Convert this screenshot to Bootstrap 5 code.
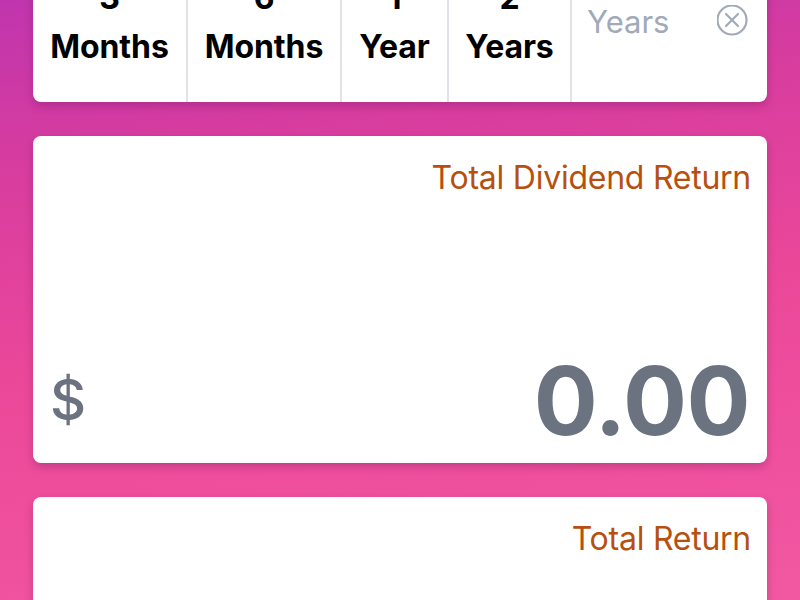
<!DOCTYPE html>
<html lang="en">
<head>
<meta charset="utf-8">
<title>Dividend calculator</title>
<link rel="stylesheet" href="https://cdn.jsdelivr.net/npm/bootstrap@5.3.0/dist/css/bootstrap.min.css">
<style>
html, body { height: 100%; overflow: hidden; }
body {
  font-family: "Inter", "Liberation Sans", sans-serif;
  background: linear-gradient(172deg, #c035ae 0%, #d63c9f 22%, #ec4899 55%, #f258a2 100%);
}
.page-wrap { padding: 0 33px; margin-top: -59px; display: flex; flex-direction: column; gap: 34px; }
.sheet { background: #fff; border: 0; border-radius: 8px; box-shadow: 0 4px 8px rgba(80, 10, 70, .25); }
.period-sheet { height: 161px; overflow: hidden; }
.period-cell { border-right: 2px solid #e5dfe8; padding-top: 32px; font-size: 32px; font-weight: 700; line-height: 49px; color: #000; text-align: center; letter-spacing: -.1px; }
.cell-a { width: 155px; } .cell-b { width: 154px; } .cell-c { width: 107px; } .cell-d { width: 123px; }
.period-custom { padding: 62px 18px 0 15px; font-size: 31px; font-weight: 400; line-height: 38px; color: #a0aab8; }
.period-custom svg { margin-top: 2px; }
.stat-sheet { height: 327px; padding: 23px 16px 0 17px; }
.stat-title { font-size: 32px; line-height: 38px; color: #b7500f; text-align: right; letter-spacing: -.25px; }
.stat-body { height: 266px; }
.stat-cur { font-size: 56px; font-weight: 500; line-height: 60px; color: #6b7280; margin-bottom: 33px; }
.stat-val { font-size: 95px; line-height: 116px; font-weight: 700; color: #6b7280; margin: 0 1px 4px 0; letter-spacing: -.5px; }
</style>
</head>
<body>
<div class="page-wrap">
  <div class="sheet period-sheet d-flex">
    <div class="period-cell cell-a">3<br>Months</div>
    <div class="period-cell cell-b">6<br>Months</div>
    <div class="period-cell cell-c">1<br>Year</div>
    <div class="period-cell cell-d">2<br>Years</div>
    <div class="period-custom flex-grow-1 d-flex justify-content-between align-items-start">
      <span>Years</span>
      <svg width="32" height="32" viewBox="0 0 32 32" fill="none" stroke="#a0aab8" stroke-width="2.2" stroke-linecap="round" aria-hidden="true"><circle cx="15" cy="15" r="14.5"/><path d="M9 9l12 12M21 9L9 21"/></svg>
    </div>
  </div>
  <div class="sheet stat-sheet">
    <div class="stat-title">Total Dividend Return</div>
    <div class="stat-body d-flex justify-content-between align-items-end">
      <span class="stat-cur">$</span>
      <span class="stat-val">0.00</span>
    </div>
  </div>
  <div class="sheet stat-sheet">
    <div class="stat-title">Total Return</div>
  </div>
</div>
<script src="https://cdn.jsdelivr.net/npm/bootstrap@5.3.0/dist/js/bootstrap.bundle.min.js"></script>
</body>
</html>
